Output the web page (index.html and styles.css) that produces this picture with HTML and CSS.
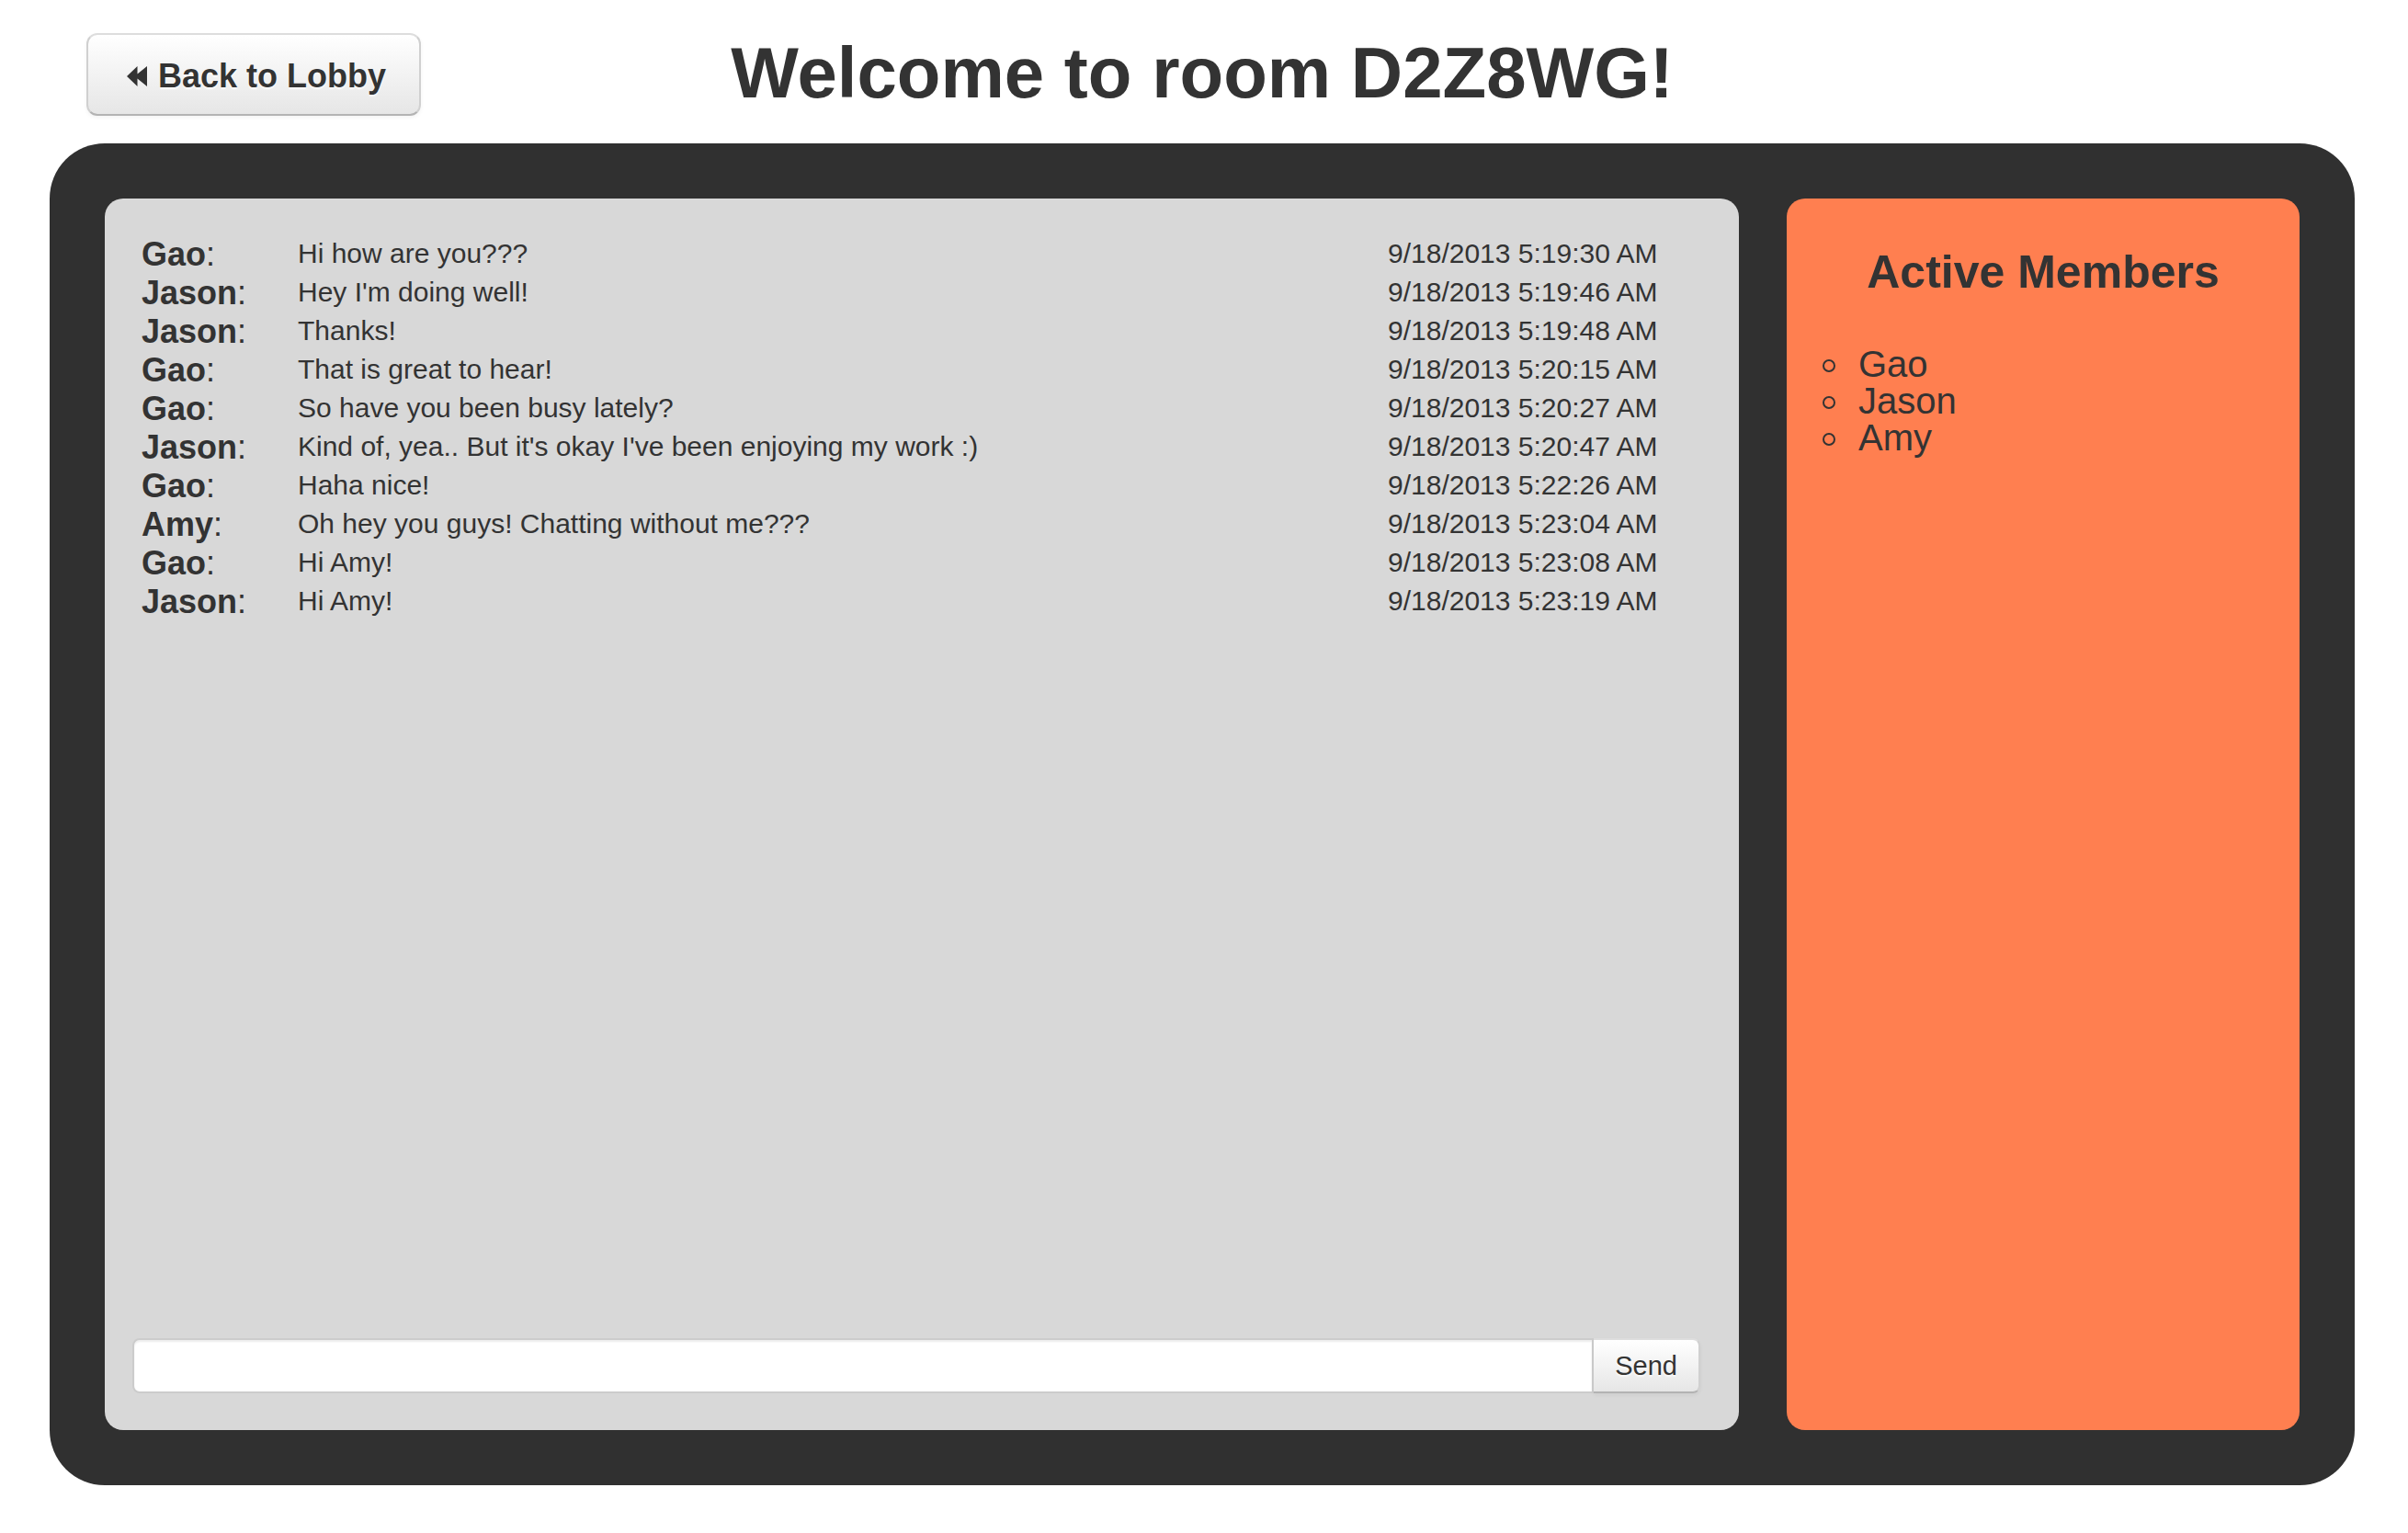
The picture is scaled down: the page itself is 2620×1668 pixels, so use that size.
FILE: index.html
```html
<!DOCTYPE html>
<html lang="en">
<head>
<meta charset="utf-8">
<title>Room D2Z8WG</title>
<link rel="stylesheet" href="styles.css">
</head>
<body>
<header class="top">
  <a class="btn btn-back" href="#lobby">
    <svg class="icon" viewBox="0 0 28 24" aria-hidden="true"><path d="M4 12 15.500 1V9.500L26 1V23L15.500 14.500V23Z"/></svg>
    <span>Back to Lobby</span>
  </a>
  <h1>Welcome to room D2Z8WG!</h1>
</header>
<main class="room">
  <section class="chat" aria-label="Chat">
    <table class="log">
      <colgroup><col class="col-name"><col><col class="col-time"></colgroup>
      <tbody>
        <tr><th scope="row">Gao<span>:</span></th><td>Hi how are you???</td><td>9/18/2013 5:19:30 AM</td></tr>
        <tr><th scope="row">Jason<span>:</span></th><td>Hey I'm doing well!</td><td>9/18/2013 5:19:46 AM</td></tr>
        <tr><th scope="row">Jason<span>:</span></th><td>Thanks!</td><td>9/18/2013 5:19:48 AM</td></tr>
        <tr><th scope="row">Gao<span>:</span></th><td>That is great to hear!</td><td>9/18/2013 5:20:15 AM</td></tr>
        <tr><th scope="row">Gao<span>:</span></th><td>So have you been busy lately?</td><td>9/18/2013 5:20:27 AM</td></tr>
        <tr><th scope="row">Jason<span>:</span></th><td>Kind of, yea.. But it's okay I've been enjoying my work :)</td><td>9/18/2013 5:20:47 AM</td></tr>
        <tr><th scope="row">Gao<span>:</span></th><td>Haha nice!</td><td>9/18/2013 5:22:26 AM</td></tr>
        <tr><th scope="row">Amy<span>:</span></th><td>Oh hey you guys! Chatting without me???</td><td>9/18/2013 5:23:04 AM</td></tr>
        <tr><th scope="row">Gao<span>:</span></th><td>Hi Amy!</td><td>9/18/2013 5:23:08 AM</td></tr>
        <tr><th scope="row">Jason<span>:</span></th><td>Hi Amy!</td><td>9/18/2013 5:23:19 AM</td></tr>
      </tbody>
    </table>
    <form class="composer">
      <input class="message" type="text" aria-label="Message">
      <button class="btn btn-send" type="submit">Send</button>
    </form>
  </section>
  <aside class="members">
    <h2>Active Members</h2>
    <ul>
      <li>Gao</li>
      <li>Jason</li>
      <li>Amy</li>
    </ul>
  </aside>
</main>
</body>
</html>
```
FILE: styles.css
```css
*,
*::before {
  box-sizing: border-box;
}

body {
  display: flex;
  flex-direction: column;
  min-height: 100vh;
  margin: 0;
  padding: 36px 58px 52px 54px;
  background: #fff;
  color: #333;
  font-family: "Liberation Sans", Arial, sans-serif;
  font-size: 30px;
  line-height: 40px;
}

h1,
h2 {
  margin: 0;
  text-align: center;
}

h1 {
  font-size: 78px;
  line-height: 86px;
}

h2 {
  font-size: 50px;
  line-height: 60px;
}

.top {
  display: grid;
  grid-template-columns: 1fr auto 1fr;
  align-items: start;
  padding: 0 40px 30px;
}

.btn {
  border: 2px solid #ddd;
  border-color: #ddd #d0d0d0 #b3b3b3;
  background: linear-gradient(#fff, #e6e6e6);
  box-shadow: 0 2px 4px rgba(0, 0, 0, 0.05);
  color: #333;
  font-family: inherit;
  text-decoration: none;
  text-shadow: 0 2px 2px rgba(255, 255, 255, 0.75);
  white-space: nowrap;
  cursor: pointer;
}

.btn-back {
  display: flex;
  align-items: center;
  justify-self: start;
  gap: 10px;
  height: 90px;
  padding: 4px 36px 0 38px;
  border-radius: 12px;
  font-size: 36px;
  font-weight: bold;
}

.icon {
  width: 28px;
  height: 24px;
  fill: currentColor;
}

.room {
  display: grid;
  flex: 1;
  grid-template-columns: minmax(0, 1778fr) minmax(0, 558fr);
  gap: 52px;
  padding: 60px;
  border-radius: 60px;
  background: #303030;
}

.chat,
.members {
  border-radius: 20px;
}

.chat {
  display: flex;
  flex-direction: column;
  justify-content: space-between;
  padding: 40px 42px 40px 30px;
  background: #d8d8d8;
}

.log {
  width: calc(100% - 10px);
  margin-left: 10px;
  border-collapse: collapse;
  table-layout: fixed;
}

.col-name {
  width: 170px;
}

.col-time {
  width: 340px;
}

.log th,
.log td {
  padding: 0;
  text-align: left;
  vertical-align: top;
}

.log th {
  font-size: 36px;
  line-height: 42px;
}

.log th span {
  font-weight: normal;
}

.composer {
  display: flex;
  height: 60px;
}

.message {
  flex: 1;
  min-width: 0;
  padding: 8px 12px;
  border: 2px solid #ccc;
  border-radius: 8px 0 0 8px;
  background: #fff;
  box-shadow: inset 0 2px 2px rgba(0, 0, 0, 0.075);
  color: inherit;
  font: inherit;
}

.btn-send {
  padding: 0 23px;
  border-left: 0;
  border-radius: 0 8px 8px 0;
  font-size: 29px;
}

.members {
  padding: 50px 20px;
  background: #ff7f50;
}

.members ul {
  margin: 50px 0 0;
  padding-left: 19px;
  font-size: 40px;
  list-style: none;
}

.members li {
  display: flex;
  align-items: center;
  gap: 25px;
}

.members li::before {
  width: 14px;
  height: 14px;
  margin-top: 4px;
  border: 2px solid #333;
  border-radius: 50%;
  content: "";
}
```
